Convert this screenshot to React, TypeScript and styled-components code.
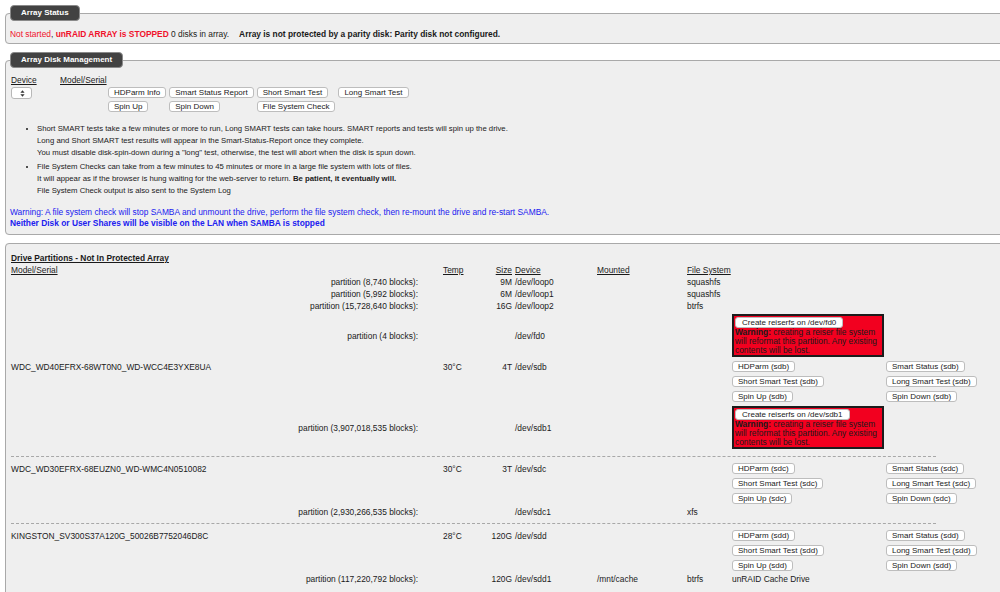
import React from 'react';
import styled, { createGlobalStyle } from 'styled-components';

const GlobalStyle = createGlobalStyle`
  html, body { margin: 0; padding: 0; background: #fff; overflow: hidden; }
  body {
    font-family: "Liberation Sans", Arial, Helvetica, sans-serif;
    font-size: 8.4px;
    color: #1a1a1a;
  }
`;

const Page = styled.div`
  width: 1030px;
  padding: 5px 0 0 5px;
  display: flex;
  flex-direction: column;
  gap: 8px;
`;

const Fieldset = styled.fieldset<{ $pt?: number; $pb?: number; $px?: number }>`
  margin: 0;
  min-width: 0;
  border: 1px solid #a9a9a9;
  border-radius: 4px;
  background: #efefef;
  padding: ${(p) => p.$pt ?? 6}px ${(p) => p.$px ?? 4}px ${(p) => p.$pb ?? 4}px;
`;

const Legend = styled.legend`
  box-sizing: border-box;
  height: 16px;
  line-height: 14px;
  padding: 0 10px;
  background: #424242;
  border: 1px solid #8a8a8a;
  border-radius: 4px;
  color: #fff;
  font-weight: bold;
  font-size: 8px;
`;

const StatusLine = styled.div`
  line-height: 12px;
  white-space: nowrap;
`;

const Red = styled.span<{ $bold?: boolean }>`
  color: #f0112b;
  font-weight: ${(p) => (p.$bold ? 'bold' : 'normal')};
`;

const Strong = styled.b<{ $gap?: number }>`
  font-weight: bold;
  margin-left: ${(p) => p.$gap ?? 0}px;
`;

const Under = styled.span<{ $bold?: boolean }>`
  text-decoration: underline;
  font-weight: ${(p) => (p.$bold ? 'bold' : 'normal')};
`;

const MgmtTable = styled.div`
  display: grid;
  grid-template-columns: 49px 48px auto;
  grid-template-rows: 12px auto;
  row-gap: 1px;
  line-height: 12px;
  padding-left: 1px;
`;

const SelectWrap = styled.div`
  position: relative;
  width: 21px;
  height: 12px;
`;

const DeviceSelect = styled.select`
  appearance: none;
  -webkit-appearance: none;
  display: block;
  box-sizing: border-box;
  width: 21px;
  height: 12px;
  margin: 0;
  padding: 0;
  background: #fff;
  border: 1px solid #b8b8b8;
  border-radius: 3px;
  font-size: 8px;
`;

const SelectArrows = styled.svg`
  position: absolute;
  left: 9px;
  top: 3px;
  pointer-events: none;
`;

const ButtonGrid = styled.div`
  display: grid;
  grid-template-columns: repeat(4, auto);
  justify-content: start;
  justify-items: start;
  column-gap: 3px;
  row-gap: 3px;
`;

const Btn = styled.button`
  box-sizing: border-box;
  height: 11px;
  margin: 0;
  padding: 0 5px;
  font-family: "Liberation Sans", Arial, Helvetica, sans-serif;
  font-size: 8px;
  line-height: 9px;
  color: #1a1a1a;
  background: #fff;
  border: 1px solid #bdbdbd;
  border-radius: 3px;
  white-space: nowrap;
`;

const Notes = styled.ul`
  margin: 11px 0 0;
  padding-left: 27px;
  font-size: 7.75px;
  line-height: 12px;
  list-style: disc;
`;

const Note = styled.li`
  margin-bottom: 2px;
  &::marker { font-size: 7px; }
`;

const Blue = styled.div<{ $bold?: boolean }>`
  color: #2020f0;
  line-height: 11px;
  font-weight: ${(p) => (p.$bold ? 'bold' : 'normal')};
`;

const BlueBlock = styled.div`
  margin-top: 10px;
`;

const DriveTitle = styled.div`
  height: 12px;
  line-height: 12px;
`;

const Row = styled.div<{ $h: number }>`
  display: grid;
  grid-template-columns: 432px 40px 29px 85px 90px 45px 154px auto;
  align-items: center;
  height: ${(p) => p.$h}px;
  line-height: 10px;
  white-space: nowrap;
`;

const Cell = styled.div<{ $col: number }>`
  text-align: ${(p) => (p.$col === 0 ? 'right' : p.$col === 2 ? 'right' : 'left')};
  padding-right: ${(p) => (p.$col === 0 ? 25 : 0)}px;
  padding-left: ${(p) => (p.$col === 3 ? 3 : 0)}px;
`;

const ModelCell = styled.div`
  text-align: left;
`;

const Separator = styled.div`
  height: 10px;
  display: flex;
  align-items: center;
`;

const Dash = styled.div`
  width: 925px;
  border-top: 1px dashed #a8a8a8;
`;

const ReiserBox = styled.div`
  box-sizing: border-box;
  width: 152px;
  height: 43px;
  background: #f2001f;
  border: 2px solid #1c1c1c;
  padding: 1px 1px 0;
  color: #1a1a1a;
  line-height: 9.1px;
  overflow: hidden;
`;

const WarnLine = styled.div`
  white-space: nowrap;
`;

const ReiserButton = styled(Btn)`
  display: block;
  height: 10.5px;
  padding: 0 6px;
`;

type CellVal = React.ReactNode;

const DRow: React.FC<{ h: number; cells: CellVal[]; model?: boolean }> = ({ h, cells, model }) => (
  <Row $h={h}>
    {Array.from({ length: 8 }).map((_, i) =>
      i === 0 && model ? (
        <ModelCell key={i}>{cells[0]}</ModelCell>
      ) : (
        <Cell key={i} $col={i}>
          {cells[i] ?? ''}
        </Cell>
      )
    )}
  </Row>
);

const Reiser: React.FC<{ dev: string }> = ({ dev }) => (
  <ReiserBox>
    <ReiserButton>Create reiserfs on {dev}</ReiserButton>
    <WarnLine>
      <b>Warning:</b> creating a reiser file system
    </WarnLine>
    <WarnLine>will reformat this partition. Any existing</WarnLine>
    <WarnLine>contents will be lost.</WarnLine>
  </ReiserBox>
);

type Part = {
  blocks: string;
  size?: string;
  device: string;
  mount?: string;
  fs?: string;
  note?: string;
  reiser?: boolean;
};

type Drive = {
  model: string;
  temp: string;
  size: string;
  dev: string;
  parts: Part[];
};

const loops: Part[] = [
  { blocks: '8,740', size: '9M', device: '/dev/loop0', fs: 'squashfs' },
  { blocks: '5,992', size: '6M', device: '/dev/loop1', fs: 'squashfs' },
  { blocks: '15,728,640', size: '16G', device: '/dev/loop2', fs: 'btrfs' },
  { blocks: '4', device: '/dev/fd0', reiser: true },
];

const drives: Drive[] = [
  {
    model: 'WDC_WD40EFRX-68WT0N0_WD-WCC4E3YXE8UA',
    temp: '30°C',
    size: '4T',
    dev: 'sdb',
    parts: [{ blocks: '3,907,018,535', device: '/dev/sdb1', reiser: true }],
  },
  {
    model: 'WDC_WD30EFRX-68EUZN0_WD-WMC4N0510082',
    temp: '30°C',
    size: '3T',
    dev: 'sdc',
    parts: [{ blocks: '2,930,266,535', device: '/dev/sdc1', fs: 'xfs' }],
  },
  {
    model: 'KINGSTON_SV300S37A120G_50026B7752046D8C',
    temp: '28°C',
    size: '120G',
    dev: 'sdd',
    parts: [
      {
        blocks: '117,220,792',
        size: '120G',
        device: '/dev/sdd1',
        mount: '/mnt/cache',
        fs: 'btrfs',
        note: 'unRAID Cache Drive',
      },
    ],
  },
];

const PartRow: React.FC<{ p: Part }> = ({ p }) => (
  <DRow
    h={p.reiser ? 47 : 12}
    cells={[
      `partition (${p.blocks} blocks):`,
      '',
      p.size ?? '',
      p.device,
      p.mount ?? '',
      p.fs ?? '',
      p.reiser ? <Reiser dev={p.device} /> : p.note ?? '',
      '',
    ]}
  />
);

const DriveBlock: React.FC<{ d: Drive; sep: boolean }> = ({ d, sep }) => (
  <>
    <DRow
      h={15}
      model
      cells={[
        d.model,
        d.temp,
        d.size,
        `/dev/${d.dev}`,
        '',
        '',
        <Btn>HDParm ({d.dev})</Btn>,
        <Btn>Smart Status ({d.dev})</Btn>,
      ]}
    />
    <DRow
      h={15}
      cells={['', '', '', '', '', '', <Btn>Short Smart Test ({d.dev})</Btn>, <Btn>Long Smart Test ({d.dev})</Btn>]}
    />
    <DRow h={15} cells={['', '', '', '', '', '', <Btn>Spin Up ({d.dev})</Btn>, <Btn>Spin Down ({d.dev})</Btn>]} />
    {d.parts.map((p) => (
      <PartRow key={p.device} p={p} />
    ))}
    {sep && (
      <Separator>
        <Dash />
      </Separator>
    )}
  </>
);

export default function App() {
  return (
    <>
      <GlobalStyle />
      <Page>
        <Fieldset $pt={7} $pb={3}>
          <Legend>Array Status</Legend>
          <StatusLine>
            <Red>Not started</Red>, <Red $bold>unRAID ARRAY is STOPPED</Red> 0 disks in array.
            <Strong $gap={10}>Array is not protected by a parity disk: Parity disk not configured.</Strong>
          </StatusLine>
        </Fieldset>

        <Fieldset $pt={6} $pb={5}>
          <Legend>Array Disk Management</Legend>
          <MgmtTable>
            <Under>Device</Under>
            <Under>Model/Serial</Under>
            <span />
            <SelectWrap>
              <DeviceSelect aria-label="Device">
                <option value=""></option>
              </DeviceSelect>
              <SelectArrows width="5" height="7" viewBox="0 0 5 7">
                <path d="M2.5 0.3 L4.6 2.8 L0.4 2.8 Z" fill="#333" />
                <path d="M2.5 6.7 L4.6 4.2 L0.4 4.2 Z" fill="#333" />
              </SelectArrows>
            </SelectWrap>
            <span />
            <ButtonGrid>
              <Btn>HDParm Info</Btn>
              <Btn>Smart Status Report</Btn>
              <Btn>Short Smart Test</Btn>
              <Btn>Long Smart Test</Btn>
              <Btn>Spin Up</Btn>
              <Btn>Spin Down</Btn>
              <Btn>File System Check</Btn>
            </ButtonGrid>
          </MgmtTable>
          <Notes>
            <Note>
              Short SMART tests take a few minutes or more to run, Long SMART tests can take hours. SMART reports and
              tests will spin up the drive.
              <br />
              Long and Short SMART test results will appear in the Smart-Status-Report once they complete.
              <br />
              You must disable disk-spin-down during a "long" test, otherwise, the test will abort when the disk is spun
              down.
            </Note>
            <Note>
              File System Checks can take from a few minutes to 45 minutes or more in a large file system with lots of
              files.
              <br />
              It will appear as if the browser is hung waiting for the web-server to return.{' '}
              <b>Be patient, it eventually will.</b>
              <br />
              File System Check output is also sent to the System Log
            </Note>
          </Notes>
          <BlueBlock>
            <Blue>
              Warning: A file system check will stop SAMBA and unmount the drive, perform the file system check, then
              re-mount the drive and re-start SAMBA.
            </Blue>
            <Blue $bold>Neither Disk or User Shares will be visible on the LAN when SAMBA is stopped</Blue>
          </BlueBlock>
        </Fieldset>

        <Fieldset $pt={8} $px={5} $pb={20}>
          <DriveTitle>
            <Under $bold>Drive Partitions - Not In Protected Array</Under>
          </DriveTitle>
          <DRow
            h={12}
            model
            cells={[
              <Under>Model/Serial</Under>,
              <Under>Temp</Under>,
              <Under>Size</Under>,
              <Under>Device</Under>,
              <Under>Mounted</Under>,
              <Under>File System</Under>,
              '',
              '',
            ]}
          />
          {loops.map((p) => (
            <PartRow key={p.device} p={p} />
          ))}
          {drives.map((d, i) => (
            <DriveBlock key={d.dev} d={d} sep={i < drives.length - 1} />
          ))}
        </Fieldset>
      </Page>
    </>
  );
}
